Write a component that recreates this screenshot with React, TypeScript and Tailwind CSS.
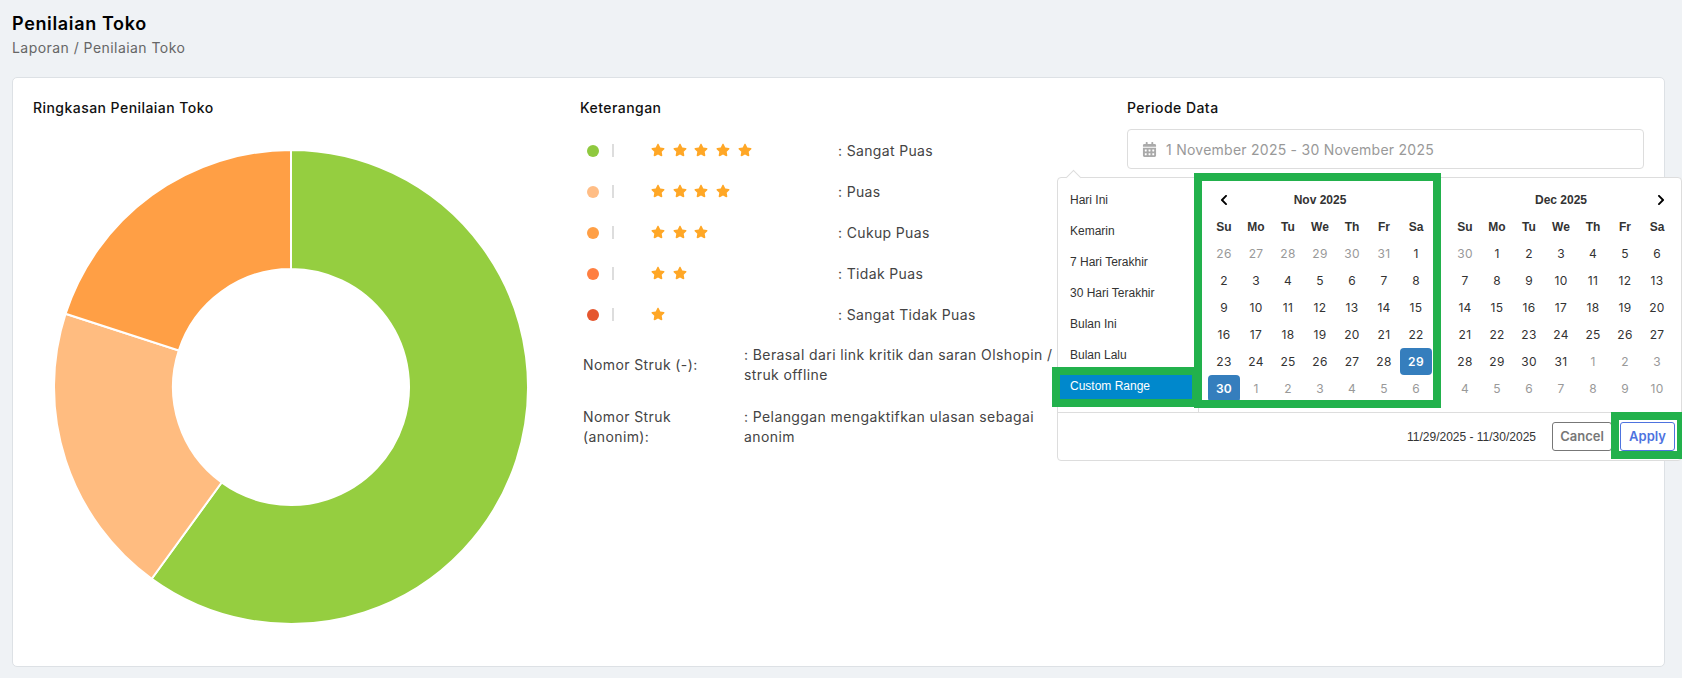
import React from 'react';
import { FaCalendarAlt, FaChevronLeft, FaChevronRight, FaStar } from 'react-icons/fa';

const LEGEND = [
  { color: 'bg-[#8fc93f]', stars: 5, label: ': Sangat Puas' },
  { color: 'bg-[#ffbd85]', stars: 4, label: ': Puas' },
  { color: 'bg-[#ff9f45]', stars: 3, label: ': Cukup Puas' },
  { color: 'bg-[#ff7f41]', stars: 2, label: ': Tidak Puas' },
  { color: 'bg-[#e5562f]', stars: 1, label: ': Sangat Tidak Puas' },
];

const RANGES = ['Hari Ini', 'Kemarin', '7 Hari Terakhir', '30 Hari Terakhir', 'Bulan Ini', 'Bulan Lalu', 'Custom Range'];
const DAYS = ['Su', 'Mo', 'Tu', 'We', 'Th', 'Fr', 'Sa'];

type Cell = { d: number; off?: boolean; active?: boolean };

const buildMonth = (prevStart: number, prevEnd: number, total: number, activeDays: number[]): Cell[] => {
  const cells: Cell[] = [];
  for (let d = prevStart; d <= prevEnd; d++) cells.push({ d, off: true });
  for (let d = 1; d <= total; d++) cells.push({ d, active: activeDays.includes(d) });
  let next = 1;
  while (cells.length < 42) cells.push({ d: next++, off: true });
  return cells;
};

const NOV = buildMonth(26, 31, 30, [29, 30]);
const DEC = buildMonth(30, 30, 31, []);

const polar = (r: number, pct: number) => {
  const a = (pct / 100) * Math.PI * 2;
  return `${238 + r * Math.sin(a)} ${238 - r * Math.cos(a)}`;
};

const slice = (from: number, to: number) => {
  const big = to - from > 50 ? 1 : 0;
  return `M${polar(237, from)} A237 237 0 ${big} 1 ${polar(237, to)} L${polar(118, to)} A118 118 0 ${big} 0 ${polar(118, from)} Z`;
};

const Donut = () => (
  <svg width="476" height="476" viewBox="0 0 476 476" className="mt-[31px] ml-[20px] block">
    <path d={slice(0, 60)} fill="#95ce40" stroke="#fff" strokeWidth="2" />
    <path d={slice(60, 80)} fill="#ffbc80" stroke="#fff" strokeWidth="2" />
    <path d={slice(80, 100)} fill="#ff9f45" stroke="#fff" strokeWidth="2" />
  </svg>
);

const Calendar = ({ title, cells, side }: { title: string; cells: Cell[]; side: 'left' | 'right' }) => (
  <div className="w-[224px]">
    <div className="flex h-[27px] items-center text-[12px] font-bold text-[#333] font-['Liberation_Sans',sans-serif]">
      <div className="w-[32px] flex pl-[10px] text-black">{side === 'left' && <FaChevronLeft size={12} />}</div>
      <div className="flex-1 text-center">{title}</div>
      <div className="w-[32px] flex pl-[14px] text-black">{side === 'right' && <FaChevronRight size={12} />}</div>
    </div>
    <div className="grid grid-cols-7">
      {DAYS.map((d) => (
        <div key={d} className="h-[27px] flex items-center justify-center text-[12px] font-bold text-[#333] font-['Liberation_Sans',sans-serif]">
          {d}
        </div>
      ))}
      {cells.map((c, i) => (
        <div
          key={i}
          className={`h-[27px] flex items-center justify-center text-[12px] tracking-[0.3px] rounded-[4px] ${
            c.active ? 'bg-[#357ebd] text-white font-semibold' : c.off ? 'text-[#999]' : 'text-[#333]'
          }`}
        >
          {c.d}
        </div>
      ))}
    </div>
  </div>
);

const DatePopup = () => (
  <div className="absolute left-[-70px] top-[48px] w-[625px] bg-white border border-[#ddd] rounded-[4px]">
    <div className="absolute -top-[6px] left-[10px] w-[11px] h-[11px] rotate-45 bg-white border-t border-l border-[#ddd]" />
    <div className="relative flex">
      <div className="w-[141px] border-r border-[#ddd] pt-[6px] font-['Liberation_Sans',sans-serif] text-[12px] text-[#333]">
        {RANGES.map((r) => (
          <div key={r} className={`h-[31px] flex items-center pl-3 ${r === 'Custom Range' ? 'bg-[#0088cc] text-white' : ''}`}>
            {r}
          </div>
        ))}
      </div>
      <div className="flex gap-[17px] pl-[9px] pt-[8px] pb-[10px]">
        <Calendar title="Nov 2025" cells={NOV} side="left" />
        <Calendar title="Dec 2025" cells={DEC} side="right" />
      </div>
    </div>
    <div className="relative h-[48px] border-t border-[#ddd] flex items-center justify-end pr-[6px]">
      <span className="text-[12px] text-[#333] mr-[16px] font-['Liberation_Sans',sans-serif]">11/29/2025 - 11/30/2025</span>
      <button className="w-[60px] h-[29px] border border-[#777] rounded-[3px] text-[13px] font-semibold text-[#777]">Cancel</button>
      <button className="w-[55px] h-[29px] ml-[8px] border border-[#4e73df] rounded-[3px] text-[13px] font-semibold text-[#4e73df]">Apply</button>
    </div>
  </div>
);

export default function App() {
  return (
    <div className="relative h-[678px] w-full overflow-hidden bg-[#eff2f5] font-['Inter',sans-serif]">
      <div className="pl-3 pt-[12px] h-[77px]">
        <h1 className="text-[18px] leading-[24px] font-semibold tracking-[0.65px] text-black">Penilaian Toko</h1>
        <p className="mt-[2px] text-[14px] leading-[20px] tracking-[0.45px] text-[#666]">Laporan / Penilaian Toko</p>
      </div>

      <div className="ml-3 mr-[17px] h-[590px] bg-white border border-[#dde1e5] rounded-[5px] pt-[20px] pl-[20px] pr-[20px] grid grid-cols-[547px_547px_1fr]">
        <div>
          <h2 className="text-[14px] leading-[20px] font-medium tracking-[0.45px] text-[#111]">Ringkasan Penilaian Toko</h2>
          <Donut />
        </div>

        <div>
          <h2 className="text-[14px] leading-[20px] font-medium tracking-[0.45px] text-[#111]">Keterangan</h2>
          <div className="mt-[12px]">
            {LEGEND.map((row) => (
              <div key={row.label} className="h-[41px] flex items-center text-[14px] tracking-[0.35px] text-[#444]">
                <span className={`ml-[7px] w-[12px] h-[12px] rounded-full ${row.color}`} />
                <span className="ml-[13px] w-[2px] h-[13px] bg-[#ddd]" />
                <div className="ml-[37px] w-[187px] flex gap-[7.7px] -translate-y-px text-[#ffa726]">
                  {Array.from({ length: row.stars }).map((_, i) => (
                    <FaStar key={i} size={14} />
                  ))}
                </div>
                <span>{row.label}</span>
              </div>
            ))}
          </div>
          <div className="mt-[10px] ml-[3px] flex items-center text-[14px] leading-[20px] tracking-[0.4px] text-[#444]">
            <div className="w-[161px]">Nomor Struk (-):</div>
            <div className="w-[320px]">: Berasal dari link kritik dan saran Olshopin / struk offline</div>
          </div>
          <div className="mt-[22px] ml-[3px] flex text-[14px] leading-[20px] tracking-[0.4px] text-[#444]">
            <div className="w-[122px] mr-[39px]">Nomor Struk (anonim):</div>
            <div className="w-[320px]">: Pelanggan mengaktifkan ulasan sebagai anonim</div>
          </div>
        </div>

        <div>
          <h2 className="text-[14px] leading-[20px] font-medium tracking-[0.45px] text-[#111]">Periode Data</h2>
          <div className="relative mt-[11px]">
            <div className="h-[40px] border border-[#ddd] rounded-[4px] flex items-center pl-[14px] text-[14px] tracking-[0.25px] text-[#999]">
              <FaCalendarAlt size={15} className="text-[#aaa]" />
              <span className="ml-[9px]">1 November 2025 - 30 November 2025</span>
            </div>
            <DatePopup />
          </div>
        </div>
      </div>

      {/* green marker boxes drawn over the screenshot */}
      <div className="absolute left-[1052px] top-[367px] w-[148px] h-[40px] border-8 border-[#22b14c] pointer-events-none" />
      <div className="absolute left-[1194px] top-[173px] w-[247px] h-[235px] border-8 border-[#22b14c] pointer-events-none" />
      <div className="absolute left-[1611px] top-[412px] w-[74px] h-[47px] border-8 border-[#22b14c] pointer-events-none" />
    </div>
  );
}
